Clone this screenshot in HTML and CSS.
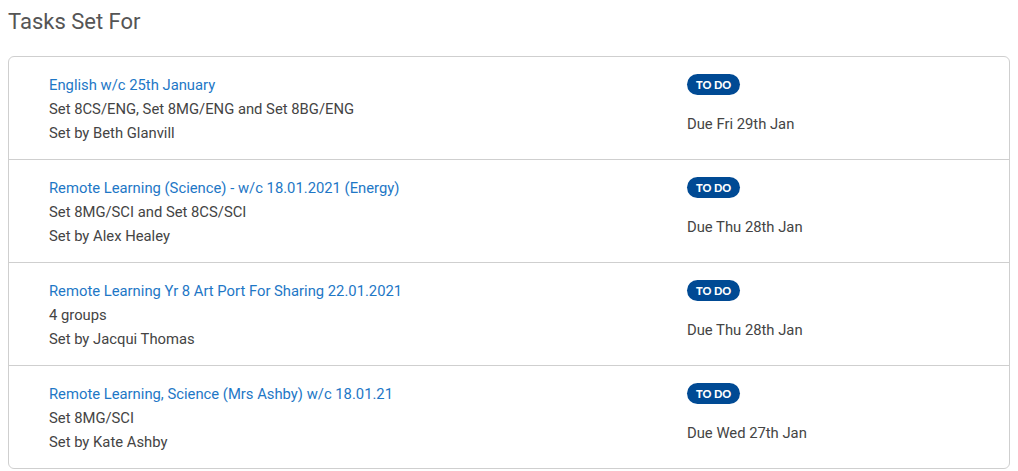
FILE: index.html
```html
<!DOCTYPE html>
<html>
<head>
<meta charset="utf-8">
<link rel="stylesheet" href="styles.css">
</head>
<body>
<h2 class="heading">Tasks Set For</h2>
<div class="card">
  <div class="task">
    <div class="info">
      <a class="title" href="#">English w/c 25th January</a>
      <div class="line">Set 8CS/ENG, Set 8MG/ENG and Set 8BG/ENG</div>
      <div class="line">Set by Beth Glanvill</div>
    </div>
    <div class="status">
      <span class="badge">TO DO</span>
      <div class="due">Due Fri 29th Jan</div>
    </div>
  </div>
  <div class="task">
    <div class="info">
      <a class="title" href="#">Remote Learning (Science) - w/c 18.01.2021 (Energy)</a>
      <div class="line">Set 8MG/SCI and Set 8CS/SCI</div>
      <div class="line">Set by Alex Healey</div>
    </div>
    <div class="status">
      <span class="badge">TO DO</span>
      <div class="due">Due Thu 28th Jan</div>
    </div>
  </div>
  <div class="task">
    <div class="info">
      <a class="title" href="#">Remote Learning Yr 8 Art Port For Sharing 22.01.2021</a>
      <div class="line">4 groups</div>
      <div class="line">Set by Jacqui Thomas</div>
    </div>
    <div class="status">
      <span class="badge">TO DO</span>
      <div class="due">Due Thu 28th Jan</div>
    </div>
  </div>
  <div class="task">
    <div class="info">
      <a class="title" href="#">Remote Learning, Science (Mrs Ashby) w/c 18.01.21</a>
      <div class="line">Set 8MG/SCI</div>
      <div class="line">Set by Kate Ashby</div>
    </div>
    <div class="status">
      <span class="badge">TO DO</span>
      <div class="due">Due Wed 27th Jan</div>
    </div>
  </div>
</div>
</body>
</html>
```
FILE: styles.css
```css
html, body {
  margin: 0;
  padding: 0;
  background: #fff;
}
body {
  padding: 8px 8px 0 8px;
  font-family: "Roboto", "Liberation Sans", sans-serif;
  color: #444;
}
.heading {
  margin: 0;
  height: 48px;
  font-size: 22px;
  font-weight: 400;
  line-height: 28px;
  color: #555;
}
.card {
  width: 1000px;
  border: 1px solid #cfcfcf;
  border-radius: 6px;
}
.task {
  display: grid;
  grid-template-columns: 638px 1fr;
  padding: 16px 0 14px 40px;
  border-top: 1px solid #cfcfcf;
}
.task:first-child {
  border-top: none;
}
.info {
  display: flex;
  flex-direction: column;
  font-size: 14.8px;
  line-height: 24px;
}
.title {
  color: #1e77c6;
  text-decoration: none;
}
.status {
  display: flex;
  flex-direction: column;
  align-items: flex-start;
  font-size: 14.8px;
  line-height: 24px;
}
.badge {
  margin-top: 1px;
  height: 21px;
  line-height: 21px;
  padding: 0 9px;
  border-radius: 11px;
  background: #004a94;
  color: #fff;
  font-family: "Lato", "Roboto", sans-serif;
  font-size: 11px;
  font-weight: 900;
}
.due {
  margin-top: 17px;
}
```
